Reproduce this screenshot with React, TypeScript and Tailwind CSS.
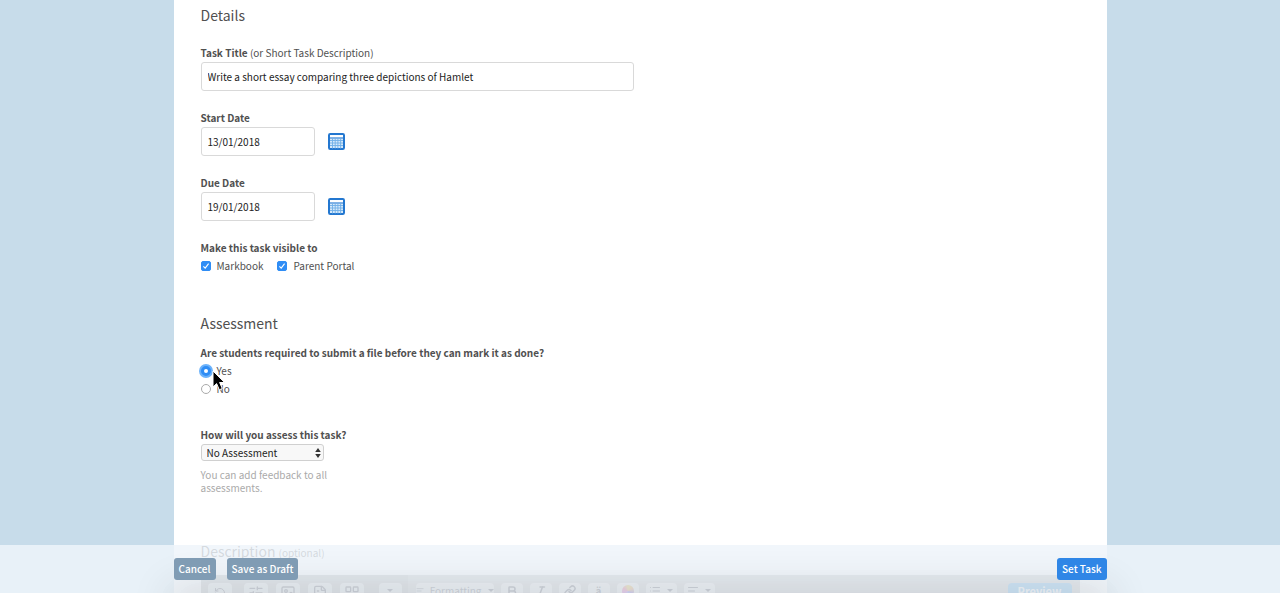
import { useState, type ReactNode } from "react"
import {
  Bold,
  FileText,
  Image,
  Italic,
  LayoutGrid,
  Link,
  List,
  RotateCcw,
  SlidersHorizontal,
  TextAlignStart,
} from "lucide-react"
import { clsx } from "clsx"

const toolClasses = "flex h-7 shrink-0 items-start justify-center gap-1.5 rounded bg-white/60 leading-4 text-[#334]"
const buttonClasses = "relative h-[22px] rounded-[3px] px-[5px]"

const insertTools = [
  { title: "Record", icon: SlidersHorizontal },
  { title: "Image", icon: Image },
  { title: "File", icon: FileText },
  { title: "Table", icon: LayoutGrid },
]

const textTools = [
  { title: "Bold", icon: Bold },
  { title: "Italic", icon: Italic },
  { title: "Link", icon: Link },
]

function Caret() {
  return <span className="mt-1.5 border-x-3 border-t-3 border-x-transparent border-t-[#334]" />
}

function CalendarIcon() {
  return (
    <svg viewBox="0 0 17 17" className="size-[17px]" aria-hidden="true">
      <rect x="1" y="1" width="15" height="15" rx="1.2" fill="#d5e9fa" stroke="#2377d0" strokeWidth="2" />
      <path d="M2 3.2h13" stroke="#fff" strokeWidth="2.2" />
      <path d="M2 5h13" stroke="#2377d0" strokeWidth="1" />
      <path d="M2 7.5h13M2 10h13M2 12.5h13M4.5 5.5v10M7.2 5.5v10M9.9 5.5v10M12.6 5.5v10" stroke="#6fafe8" strokeWidth="0.9" />
    </svg>
  )
}

function DateField({ id, label, initial }: { id: string; label: string; initial: string }) {
  const [value, setValue] = useState(initial)

  return (
    <div className="mb-[19px]">
      <label htmlFor={id} className="block font-bold">{label}</label>
      <div className="mt-px flex items-center gap-[13px]">
        <input
          id={id}
          value={value}
          onChange={(e) => setValue(e.target.value)}
          className="h-[29px] w-[114px] rounded-[3px] border border-[#d9d9d9] bg-white px-1.5 text-[#222] outline-none"
        />
        <button type="button" aria-label={`Pick ${label}`}>
          <CalendarIcon />
        </button>
      </div>
    </div>
  )
}

function Check({ children }: { children: ReactNode }) {
  return (
    <label className="flex h-[18px] items-center gap-1.5">
      <span className="relative flex">
        <input
          type="checkbox"
          defaultChecked
          className="peer size-[10px] appearance-none rounded-[2px] border border-[#bbb] bg-white checked:border-[#2f8df5] checked:bg-[#2f8df5]"
        />
        <svg viewBox="0 0 10 10" className="pointer-events-none absolute inset-0 hidden size-[10px] peer-checked:block">
          <path d="M2.4 5.3l1.8 1.9 3.4-4.6" fill="none" stroke="#fff" strokeWidth="1.1" />
        </svg>
      </span>
      {children}
    </label>
  )
}

function Radio({ value, selected, onSelect }: { value: string; selected: string; onSelect: (v: string) => void }) {
  return (
    <label className="flex h-[18px] items-center gap-1.5">
      <input
        type="radio"
        name="submit"
        checked={selected === value}
        onChange={() => onSelect(value)}
        className="size-[10px] appearance-none rounded-full border border-[#aaa] bg-white checked:border-3 checked:border-[#2f8df5] checked:ring-2 checked:ring-[#6cb2fa]"
      />
      {value}
    </label>
  )
}

function Pointer() {
  return (
    <svg viewBox="0 0 14 21" className="pointer-events-none absolute top-2 left-[11px] h-[21px] w-[14px]" aria-hidden="true">
      <path d="M1 1v16l3.6-3.4 2.7 6.2 3-1.3-2.7-6h5z" fill="#000" stroke="#fff" strokeWidth="1" />
    </svg>
  )
}

function Toolbar() {
  return (
    <div className="mt-[10px] flex h-24 items-start bg-[#b4b7b9] pr-2">
      <div className="flex h-full gap-2 bg-black/10 pt-2 pr-1.5 pl-[7px]">
        <button type="button" aria-label="Undo" className={clsx(toolClasses, "mr-1 w-6")}>
          <RotateCcw className="mt-1 size-3" />
        </button>
        {insertTools.map((tool) => (
          <button key={tool.title} type="button" aria-label={tool.title} className={clsx(toolClasses, "w-6")}>
            <tool.icon className="mt-0.5 size-4" />
          </button>
        ))}
        <button type="button" aria-label="More" className={clsx(toolClasses, "ml-[7px] w-[23px]")}>
          <Caret />
        </button>
      </div>
      <div className="flex gap-[7px] pt-2 pl-2">
        <button type="button" className={clsx(toolClasses, "w-[78px]")}>
          <TextAlignStart className="mt-0.5 size-3" />
          Formatting
          <Caret />
        </button>
        {textTools.map((tool) => (
          <button key={tool.title} type="button" aria-label={tool.title} className={clsx(toolClasses, "w-[22px]")}>
            <tool.icon className="mt-0.5 size-3" strokeWidth={3} />
          </button>
        ))}
        <button type="button" className={clsx(toolClasses, "w-[22px] font-bold")}>ä</button>
        <button type="button" aria-label="Colour" className={clsx(toolClasses, "w-[22px]")}>
          <span className="mt-0.5 size-3 rounded-full bg-[conic-gradient(#d6b300,#e07a18,#4a2fd0,#2f6df5,#b32dcf,#e32d6d,#d6b300)]" />
        </button>
        <button type="button" aria-label="List" className={clsx(toolClasses, "w-[31px]")}>
          <List className="mt-0.5 size-3" />
          <Caret />
        </button>
        <button type="button" aria-label="Align" className={clsx(toolClasses, "w-[31px]")}>
          <TextAlignStart className="mt-0.5 size-3" />
          <Caret />
        </button>
      </div>
      <button type="button" className="mt-2 ml-auto flex h-7 w-16 justify-center rounded-sm bg-[#2f9be8] text-[11px] leading-4 font-bold text-white">
        Preview
      </button>
    </div>
  )
}

export default function App() {
  const [title, setTitle] = useState("Write a short essay comparing three depictions of Hamlet")
  const [submit, setSubmit] = useState("Yes")

  return (
    <div className="h-screen overflow-hidden bg-[#c7dcea] font-['Noto_Sans_CJK_SC',sans-serif] text-[10px] leading-4 text-[#505050]">
      <main className="mx-auto w-full max-w-[933px] bg-white px-[27px] pt-[3px]">
        <h2 className="text-[14px] leading-6">Details</h2>

        <div className="mt-[18px] mb-[19px]">
          <label htmlFor="title" className="block">
            <b>Task Title</b> (or Short Task Description)
          </label>
          <input
            id="title"
            value={title}
            onChange={(e) => setTitle(e.target.value)}
            className="mt-px block h-[29px] w-full max-w-[433px] rounded-[3px] border border-[#d9d9d9] bg-white px-1.5 text-[#222] outline-none"
          />
        </div>

        <DateField id="start" label="Start Date" initial="13/01/2018" />
        <DateField id="due" label="Due Date" initial="19/01/2018" />

        <fieldset>
          <legend className="font-bold">Make this task visible to</legend>
          <div className="mt-px flex gap-[14px]">
            <Check>Markbook</Check>
            <Check>Parent Portal</Check>
          </div>
        </fieldset>

        <h2 className="mt-9 text-[14px] leading-6">Assessment</h2>

        <fieldset className="mt-[10px]">
          <legend className="font-bold">Are students required to submit a file before they can mark it as done?</legend>
          <div className="relative mt-px">
            <Radio value="Yes" selected={submit} onSelect={setSubmit} />
            <Radio value="No" selected={submit} onSelect={setSubmit} />
            <Pointer />
          </div>
        </fieldset>

        <div className="mt-[29px]">
          <label htmlFor="assess" className="block font-bold">How will you assess this task?</label>
          <div className="relative mt-px w-[123px]">
            <select
              id="assess"
              className="block h-[17px] w-full appearance-none rounded-[3px] border border-[#d0d0d0] bg-[#f8f8f8] px-[5px] leading-[15px] text-[#222]"
            >
              <option>No Assessment</option>
            </select>
            <svg viewBox="0 0 6 10" className="pointer-events-none absolute top-1 right-[3px] h-[10px] w-[6px]">
              <path d="M3 0l2.8 4H0.2zM3 10l2.8-4H0.2z" fill="#333" />
            </svg>
          </div>
          <p className="mt-[7px] w-[140px] leading-[13px] text-[#aaa]">You can add feedback to all assessments.</p>
        </div>

        <h2 className="mt-[45px] text-[14px] leading-6">
          Description <span className="text-[10px]">(optional)</span>
        </h2>
        <Toolbar />
      </main>

      <footer className="fixed inset-x-0 bottom-0 bg-[#eef4fa]/84">
        <div className="relative mx-auto flex h-12 w-full max-w-[933px] items-center gap-[11px] font-medium text-white">
          <div className="pointer-events-none absolute inset-x-0 top-full h-5 shadow-[0_0_40px_4px_rgba(0,0,0,0.16)]" />
          <button type="button" className={clsx(buttonClasses, "bg-[#809cb4]")}>Cancel</button>
          <button type="button" className={clsx(buttonClasses, "bg-[#809cb4]")}>Save as Draft</button>
          <button type="button" className={clsx(buttonClasses, "ml-auto bg-[#2f86e6]")}>Set Task</button>
        </div>
      </footer>
    </div>
  )
}
